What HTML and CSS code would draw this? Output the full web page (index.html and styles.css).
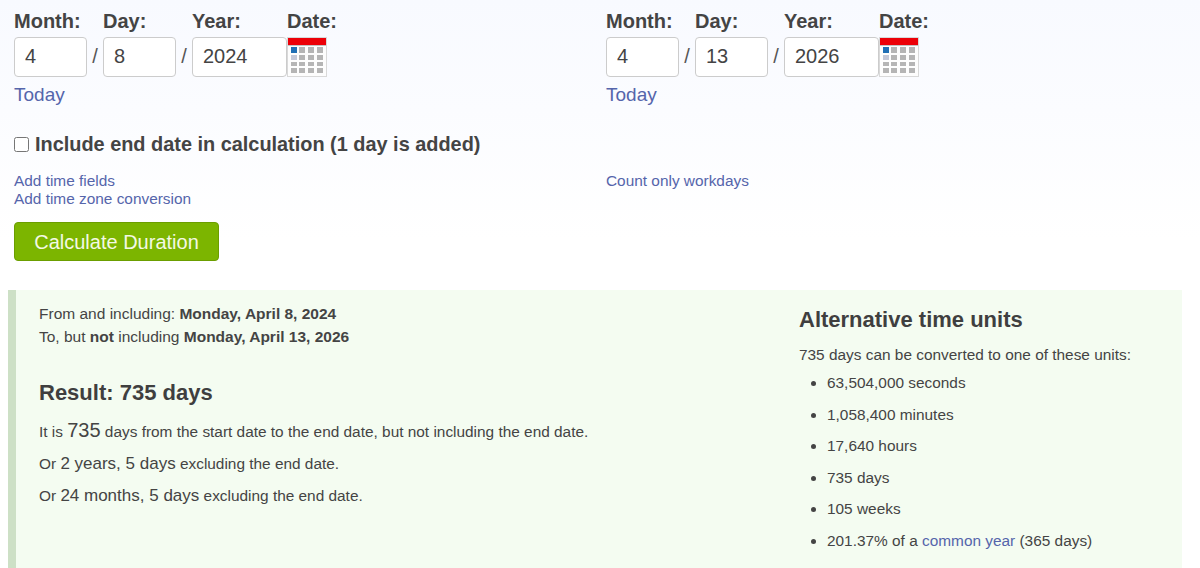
FILE: index.html
```html
<!DOCTYPE html>
<html lang="en">
<head>
  <meta charset="UTF-8">
  <title>Date Duration Calculator</title>
  <link rel="stylesheet" href="styles.css">
</head>
<body>
  <svg class="icon-defs" aria-hidden="true">
    <symbol id="cal" viewBox="0 0 40 40">
      <rect x="0.5" y="0.5" width="39" height="39" fill="#fdfdfd" stroke="#d9d9d9"/>
      <rect x="1" y="1" width="38" height="7" fill="#ec0008"/>
      <rect x="1" y="8" width="38" height="1" fill="#c4c4c4"/>
      <rect x="4" y="10" width="6" height="6" fill="#1f6fb5"/>
      <rect x="12" y="10" width="6" height="6" fill="#b5b5b5"/>
      <rect x="21" y="10" width="6" height="6" fill="#b5b5b5"/>
      <rect x="30" y="10" width="6" height="6" fill="#b5b5b5"/>
      <rect x="4" y="18" width="6" height="5" fill="#c3c8d8"/>
      <rect x="12" y="18" width="6" height="5" fill="#b5b5b5"/>
      <rect x="21" y="18" width="6" height="5" fill="#b5b5b5"/>
      <rect x="30" y="18" width="6" height="5" fill="#b5b5b5"/>
      <rect x="4" y="25" width="6" height="4" fill="#b5b5b5"/>
      <rect x="12" y="25" width="6" height="4" fill="#b5b5b5"/>
      <rect x="21" y="25" width="6" height="4" fill="#b5b5b5"/>
      <rect x="30" y="25" width="6" height="4" fill="#b5b5b5"/>
      <rect x="4" y="31" width="6" height="5" fill="#b5b5b5"/>
      <rect x="12" y="31" width="6" height="5" fill="#b5b5b5"/>
      <rect x="21" y="31" width="6" height="5" fill="#b5b5b5"/>
      <rect x="30" y="31" width="6" height="5" fill="#b5b5b5"/>
    </symbol>
  </svg>

  <form class="calc-form">
    <div class="date-columns">
      <div class="date-group">
        <div class="date-grid">
          <label class="date-label">Month:</label>
          <span></span>
          <label class="date-label">Day:</label>
          <span></span>
          <label class="date-label">Year:</label>
          <label class="date-label">Date:</label>
          <input class="date-input" type="text" value="4">
          <span class="date-sep">/</span>
          <input class="date-input" type="text" value="8">
          <span class="date-sep">/</span>
          <input class="date-input" type="text" value="2024">
          <svg class="cal-icon" aria-hidden="true"><use href="#cal"/></svg>
        </div>
        <a class="link today-link" href="#">Today</a>
      </div>
      <div class="date-group">
        <div class="date-grid">
          <label class="date-label">Month:</label>
          <span></span>
          <label class="date-label">Day:</label>
          <span></span>
          <label class="date-label">Year:</label>
          <label class="date-label">Date:</label>
          <input class="date-input" type="text" value="4">
          <span class="date-sep">/</span>
          <input class="date-input" type="text" value="13">
          <span class="date-sep">/</span>
          <input class="date-input" type="text" value="2026">
          <svg class="cal-icon" aria-hidden="true"><use href="#cal"/></svg>
        </div>
        <a class="link today-link" href="#">Today</a>
      </div>
    </div>

    <label class="include-row">
      <input class="include-check" type="checkbox">
      <span>Include end date in calculation (1 day is added)</span>
    </label>

    <div class="option-links">
      <div>
        <a class="link" href="#">Add time fields</a><br>
        <a class="link" href="#">Add time zone conversion</a>
      </div>
      <div>
        <a class="link" href="#">Count only workdays</a>
      </div>
    </div>

    <button class="calc-btn" type="button">Calculate Duration</button>
  </form>

  <section class="result-panel">
    <div class="result-main">
      <p class="range-line">From and including: <b>Monday, April 8, 2024</b></p>
      <p class="range-line">To, but <b>not</b> including <b>Monday, April 13, 2026</b></p>
      <h2 class="result-title">Result: 735 days</h2>
      <p class="result-line">It is <span class="big-num">735</span> days from the start date to the end date, but not including the end date.</p>
      <p class="result-line">Or <span class="mid-num">2 years, 5 days</span> excluding the end date.</p>
      <p class="result-line">Or <span class="mid-num">24 months, 5 days</span> excluding the end date.</p>
    </div>
    <div class="result-side">
      <h3 class="side-title">Alternative time units</h3>
      <p class="side-intro">735 days can be converted to one of these units:</p>
      <ul class="unit-list">
        <li>63,504,000 seconds</li>
        <li>1,058,400 minutes</li>
        <li>17,640 hours</li>
        <li>735 days</li>
        <li>105 weeks</li>
        <li>201.37% of a <a class="link" href="#">common year</a> (365 days)</li>
      </ul>
    </div>
  </section>
</body>
</html>
```

FILE: styles.css
```css
* {
  box-sizing: border-box;
}

html,
body {
  height: 100%;
}

body {
  margin: 0;
  overflow: hidden;
  font-family: "Liberation Sans", Arial, sans-serif;
  color: #444;
  background: linear-gradient(180deg, #f8faff 0, #fbfcff 110px, #ffffff 240px);
}

.icon-defs {
  display: none;
}

.link {
  color: #5565ab;
  text-decoration: none;
}

/* form */
.calc-form {
  padding: 11px 0 0 14px;
}

.date-columns {
  display: grid;
  grid-template-columns: 592px 1fr;
}

.date-grid {
  display: grid;
  grid-template-columns: 73px 16px 73px 16px 95px 40px;
  grid-template-rows: 26px 40px;
  align-items: center;
}

.date-label {
  font-size: 20px;
  font-weight: bold;
  line-height: 20px;
  align-self: start;
}

.date-input {
  width: 100%;
  height: 40px;
  padding: 0 10px 2px;
  font: 20px "Liberation Sans", Arial, sans-serif;
  color: #444;
  background: #fff;
  border: 1px solid #ccc;
  border-radius: 4px;
}

.date-sep {
  padding-bottom: 2px;
  font-size: 20px;
  text-align: center;
  color: #555;
}

.cal-icon {
  display: block;
  width: 40px;
  height: 40px;
}

.today-link {
  display: block;
  margin-top: 7px;
  font-size: 19px;
  line-height: 21px;
}

.include-row {
  display: flex;
  align-items: center;
  margin-top: 27px;
  font-size: 19.9px;
  font-weight: bold;
  line-height: 24px;
}

.include-check {
  width: 15px;
  height: 15px;
  margin: 0 6px 0 0;
}

.option-links {
  display: grid;
  grid-template-columns: 592px 1fr;
  margin-top: 16px;
  font-size: 15.4px;
  line-height: 18px;
}

.calc-btn {
  display: block;
  width: 205px;
  height: 39px;
  margin-top: 14px;
  padding-top: 2px;
  font: 20px "Liberation Sans", Arial, sans-serif;
  color: #f4f9e4;
  background: #7cb500;
  border: 1px solid #6b9e00;
  border-radius: 4px;
}

/* result */
.result-panel {
  display: flex;
  justify-content: space-between;
  height: 278px;
  margin: 29px 18px 0 8px;
  padding: 13px 0 0 23px;
  background: #f4fcf1;
  border-left: 8px solid #cde0c6;
}

.result-main {
  font-size: 15.4px;
}

.range-line {
  margin: 0;
  font-size: 15.5px;
  line-height: 22.5px;
}

.result-title {
  margin: 29px 0 0;
  font-size: 22px;
  line-height: 32px;
  color: #3f3f3f;
}

.result-line {
  margin: 0;
  padding-top: 11px;
  line-height: 21px;
}

.big-num {
  font-size: 20px;
}

.mid-num {
  font-size: 17px;
}

.result-side {
  width: 383px;
}

.side-title {
  margin: 1px 0 0;
  font-size: 22px;
  line-height: 32px;
  color: #3f3f3f;
}

.side-intro {
  margin: 9px 0 0;
  font-size: 15.4px;
  line-height: 20px;
}

.unit-list {
  margin: 8px 0 0;
  padding: 0 0 0 28px;
  font-size: 15.4px;
}

.unit-list li {
  line-height: 20px;
  margin-bottom: 11.6px;
}
```
